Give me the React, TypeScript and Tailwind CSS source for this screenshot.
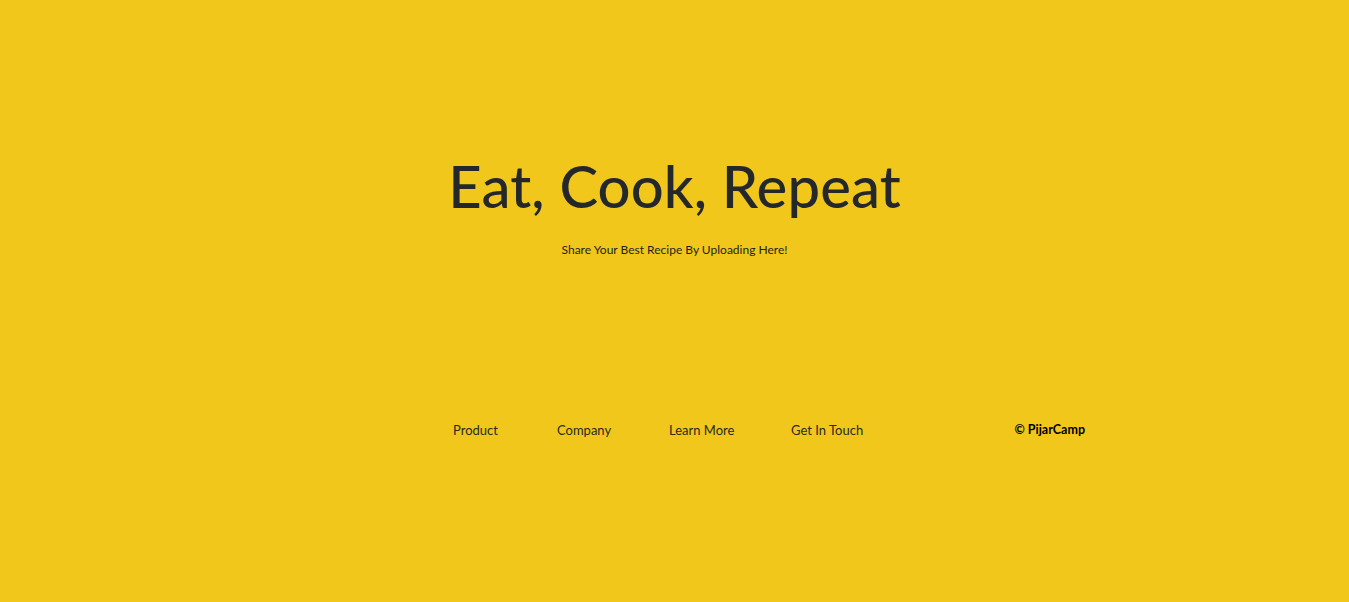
import React from "react";

const links = [
  { label: "Product", w: "w-[104px]" },
  { label: "Company", w: "w-[112px]" },
  { label: "Learn More", w: "w-[122px]" },
  { label: "Get In Touch", w: "w-auto" },
];

export default function App() {
  return (
    <div className="min-h-[602px] w-full bg-[#f0c71a] text-[#25282b] font-['Lato',sans-serif] flex flex-col items-center">
      {/* Hero */}
      <div className="pt-[151px] flex flex-col items-center">
        <h1 className="text-[58px] leading-[70px] font-medium tracking-[0.1px]">
          Eat, Cook, Repeat
        </h1>
        <p className="mt-[21px] text-[12px] leading-4 text-[#1f1f1f]">
          Share Your Best Recipe By Uploading Here!
        </p>
      </div>

      {/* Footer */}
      <div className="mt-[164px] w-[632px] flex items-center justify-between ml-[189px] text-[13px] leading-4">
        <div className="flex">
          {links.map((l) => (
            <span key={l.label} className={`${l.w} text-[#2a2a1a]`}>
              {l.label}
            </span>
          ))}
        </div>
        <span className="font-bold text-black text-[12.5px]">© PijarCamp</span>
      </div>
    </div>
  );
}
